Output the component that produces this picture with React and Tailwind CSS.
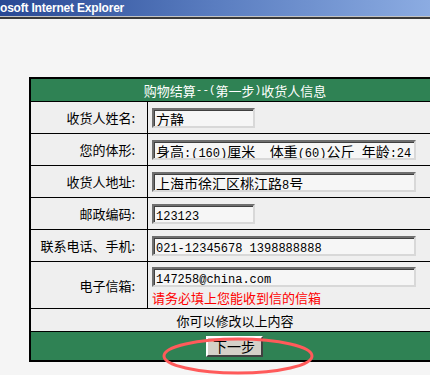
const cjk = '"Noto Sans CJK SC", "Noto Sans CJK TC", sans-serif';
const wideRe = /([\u3000-\u303f\u4e00-\u9fff\uff00-\uffef]+)/;

// split text so CJK runs get the wider face, latin runs the mono one
function FieldText({ text }) {
  const parts = text.split(wideRe);
  return (
    <span className="block leading-[16px]">
      {parts.map((p, i) =>
        wideRe.test(p) ? (
          <span key={i} className="text-[14px] font-['Noto_Sans_CJK_SC']">{p}</span>
        ) : (
          <span key={i} className="text-[12px] font-['Liberation_Mono'] whitespace-pre">{p}</span>
        )
      )}
    </span>
  );
}

function Field({ value, wide }) {
  return (
    <div
      className={`h-[20px] ${wide ? 'w-[264px]' : 'w-[103px]'} pl-[2px] pt-[1px] bg-[#f6f6f6] border-2 border-t-[#6f6f6f] border-l-[#6f6f6f] border-b-[#d8d8d8] border-r-[#d8d8d8] shadow-[inset_1px_1px_0_#404040] text-black overflow-hidden whitespace-nowrap`}
    >
      <FieldText text={value} />
    </div>
  );
}

function Row({ label, value, wide, tall, children }) {
  return (
    <div className={`flex border-t border-black ${tall ? 'h-[47px]' : 'h-[32px]'}`}>
      <div className="w-[117px] flex items-center justify-end pr-[12px] border-r border-black">
        {label}
      </div>
      <div className={`flex-1 pl-[4px] flex ${tall ? 'flex-col justify-start pt-[5px]' : 'items-center'}`}>
        <Field value={value} wide={wide} />
        {children}
      </div>
    </div>
  );
}

export default function App() {
  return (
    <div className="relative w-[430px] h-[375px] overflow-hidden bg-[#f5f5f5]">
      <div className="h-[16px] bg-gradient-to-r from-[#284894] via-[#5a7dc0] to-[#8cace2] flex items-center">
        <span className="text-white font-bold text-[12px] font-['Liberation_Sans'] leading-none tracking-[-0.2px]">
          osoft Internet Explorer
        </span>
      </div>
      <div className="h-[1px] bg-[#c4c4c4]" />
      <div className="h-[2px] bg-[#3a3a3a]" />

      <div
        className="mt-[58px] ml-[29px] w-[412px] border-2 border-black bg-[#efefef] text-[13px] text-black leading-none"
        style={{ fontFamily: cjk }}
      >
        <div className="h-[22px] bg-[#2f8254] text-white flex items-center justify-center">
          购物结算<span className="font-['Liberation_Mono'] text-[11px]">--(</span>第一步<span className="font-['Liberation_Mono'] text-[11px]">)</span>收货人信息
        </div>
        <Row label="收货人姓名:" value="方静" />
        <Row label="您的体形:" value="身高:(160)厘米  体重(60)公斤 年龄:24" wide />
        <Row label="收货人地址:" value="上海市徐汇区桃江路8号" wide />
        <Row label="邮政编码:" value="123123" />
        <Row label="联系电话、手机:" value="021-12345678 1398888888" wide />
        <Row label="电子信箱:" value="147258@china.com" wide tall>
          <div className="mt-[4px] text-[13px] text-[#ff0000]">请务必填上您能收到信的信箱</div>
        </Row>
        <div className="h-[23px] border-t border-black flex items-center justify-center">
          你可以修改以上内容
        </div>
        <div className="h-[29px] border-t border-black bg-[#2f8254] flex items-center justify-center pr-[2px]">
          <button className="w-[57px] h-[21px] bg-[#d4d0c8] border-2 border-t-white border-l-white border-b-[#404040] border-r-[#404040] text-[14px] text-black leading-none">
            下一步
          </button>
        </div>
      </div>

      <svg className="absolute left-0 top-0 pointer-events-none" width="430" height="375">
        <ellipse cx="238" cy="356" rx="74" ry="17" fill="none" stroke="#ff5a5a" strokeWidth="3" />
      </svg>
    </div>
  );
}
